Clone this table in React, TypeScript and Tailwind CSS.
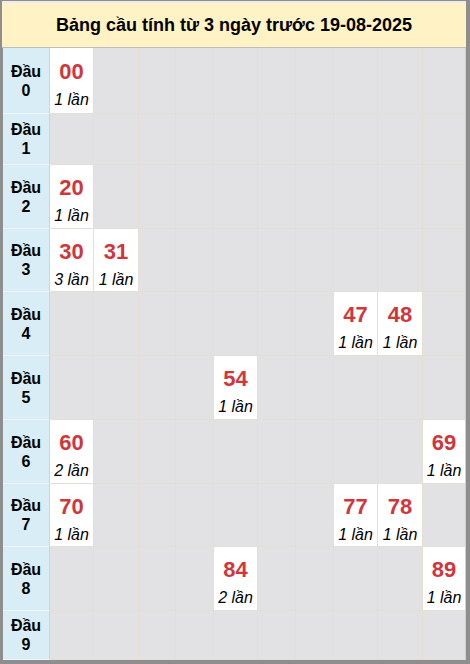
// Bảng cầu lô tô: 10 rows (Đầu 0-9) by 10 unit-digit columns

const ROW_HEIGHTS = [66, 51, 64, 63, 64, 64, 64, 63, 64, 49];

const HITS: Record<string, number> = {
  "00": 1,
  "20": 1,
  "30": 3,
  "31": 1,
  "47": 1,
  "48": 1,
  "54": 1,
  "60": 2,
  "69": 1,
  "70": 1,
  "77": 1,
  "78": 1,
  "84": 2,
  "89": 1,
};

const DataCell = ({ num, count, last }: { num: string; count?: number; last: boolean }) => {
  const border = last ? "border-r border-r-[#cfcfcf]" : "border-r border-r-[#e6ddd4]";
  if (!count) {
    return <div className={`bg-[#e2e2e4] border-b border-b-[#e6ddd4] ${border}`} />;
  }
  return (
    <div className={`bg-white border-b border-b-[#e6ddd4] ${border} flex flex-col items-center justify-center pt-[7px]`}>
      <div className="text-[22px] leading-[26px] font-bold text-[#d1363b]">{num}</div>
      <div className="mt-[6px] text-[16px] leading-[18px] italic text-black">{count} lần</div>
    </div>
  );
};

export default function App() {
  return (
    <div className="w-[470px] h-[664px] bg-[#8e8e8e] pt-px pl-[2px] pr-[4px] font-['Liberation_Sans',Arial,sans-serif] text-black">
      <div className="h-[47px] border-t-2 border-t-[#ececec] border-b border-b-[#bdbdbd] bg-[#fff2c4] flex items-center justify-center">
        <h1 className="text-[18px] font-bold">Bảng cầu tính từ 3 ngày trước 19-08-2025</h1>
      </div>
      <div className="ml-px grid grid-cols-[47px_44px_45px_37px_38px_44px_38px_38px_44px_45px_43px]">
        {ROW_HEIGHTS.map((h, r) => (
          <div key={r} className="contents">
            <div
              className="bg-[#d9edf7] border-b border-b-[#eef6fb] border-r border-r-[#cdd3d6] flex flex-col items-center justify-center text-[16px] leading-[19px] font-bold"
              style={{ height: h }}
            >
              <span>Đầu</span>
              <span>{r}</span>
            </div>
            {Array.from({ length: 10 }).map((_, c) => {
              const num = `${r}${c}`;
              return <DataCell key={c} num={num} count={HITS[num]} last={c === 9} />;
            })}
          </div>
        ))}
      </div>
    </div>
  );
}
